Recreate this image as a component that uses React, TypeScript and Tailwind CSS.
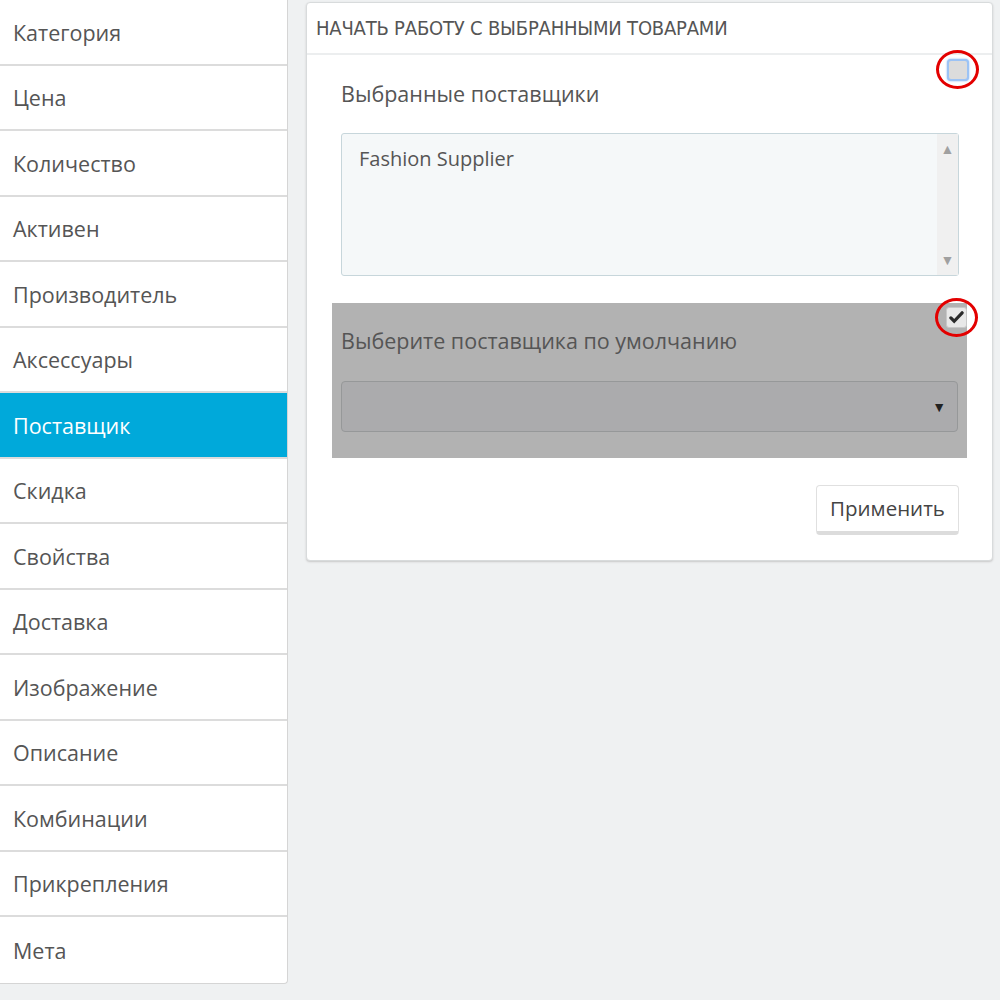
const tabs = [
  "Категория",
  "Цена",
  "Количество",
  "Активен",
  "Производитель",
  "Аксессуары",
  "Поставщик",
  "Скидка",
  "Свойства",
  "Доставка",
  "Изображение",
  "Описание",
  "Комбинации",
  "Прикрепления",
  "Мета",
];

function Marker({ checked }: { checked?: boolean }) {
  return (
    <div className="relative w-[43px] h-[39px] rounded-[50%] border-[3px] border-[#e30000] flex items-center justify-center">
      {checked ? (
        <div className="w-[21px] h-[21px] rounded-[3px] bg-[#e8e8e8] border border-[#c8c8c8] flex items-center justify-center">
          <svg width="15" height="15" viewBox="0 0 16 16">
            <path d="M2 8.5l3.5 3.5L14 3" fill="none" stroke="#2a2a2a" strokeWidth="3.4" strokeLinecap="round" />
          </svg>
        </div>
      ) : (
        <div className="w-[22px] h-[22px] rounded-[4px] bg-[#dcdcdc] border-2 border-[#9cc3f5] shadow-[0_0_2px_#7fb0f0]" />
      )}
    </div>
  );
}

export default function App() {
  return (
    <div className="w-[1000px] h-[1000px] bg-[#eff1f2] flex items-start gap-[18px] font-['Open_Sans',sans-serif] text-[#555]">
      <div className="w-[288px] bg-white border-r border-b border-[#d5d5d5] rounded-br-[4px] flex flex-col">
        {tabs.map((t, i) => (
          <div
            key={t}
            className={
              (t === "Поставщик" ? "bg-[#00a9da] text-white " : "") +
              (i < tabs.length - 1 ? "border-b-2 border-[#dcdcdc] " : "") +
              "h-[65.5px] flex items-center pl-[13px] pt-[2px] text-[21.5px]"
            }
          >
            {t}
          </div>
        ))}
      </div>

      <div className="w-[687px] mt-[2px] bg-white border border-[#d8dbdc] rounded-[4px] shadow-[0_1px_2px_#c8c8c8]">
        <div className="h-[52px] border-b-2 border-[#eceeef] flex items-center pl-[9px] font-['DejaVu_Sans_Condensed','DejaVu_Sans',sans-serif] text-[20px] text-[#555] tracking-[-0.2px] whitespace-nowrap">
          НАЧАТЬ РАБОТУ С ВЫБРАННЫМИ ТОВАРАМИ
        </div>

        <div className="relative pl-[34px] pr-[33px] pt-[23px]">
          <div className="absolute right-[13px] top-[-5px]">
            <Marker />
          </div>
          <div className="text-[21.5px] h-[32px] flex items-center">Выбранные поставщики</div>
          <div className="mt-[23px] h-[143px] bg-[#f5f8f9] border border-[#c7d6db] rounded-[3px] flex">
            <div className="flex-1 pl-[17px] pt-[10px] text-[20px] text-[#555]">Fashion Supplier</div>
            <div className="w-[21px] bg-[#f0f0f0] flex flex-col items-center justify-between py-[8px] text-[#a0a0a0] text-[14px] leading-none">
              <span>▲</span>
              <span>▼</span>
            </div>
          </div>
        </div>

        <div className="relative mx-[25px] mt-[27px] h-[155px] bg-[#b2b2b2] pl-[9px] pr-[9px] pt-[22px]">
          <div className="absolute right-[-11px] top-[-5px]">
            <Marker checked />
          </div>
          <div className="text-[21.5px] h-[32px] flex items-center text-[#555]">Выберите поставщика по умолчанию</div>
          <div className="mt-[24px] h-[51px] bg-[#ababad] border border-[#969899] rounded-[4px] flex items-center justify-end pr-[11px] text-[#222] text-[14px]">
            ▼
          </div>
        </div>

        <div className="flex justify-end pr-[33px] pt-[27px] pb-[25px]">
          <div className="w-[143px] h-[50px] bg-white border border-[#e0e0e0] border-b-[4px] border-b-[#dcdcdc] rounded-[4px] flex items-center justify-center text-[20.5px] text-[#444]">
            Применить
          </div>
        </div>
      </div>
    </div>
  );
}
